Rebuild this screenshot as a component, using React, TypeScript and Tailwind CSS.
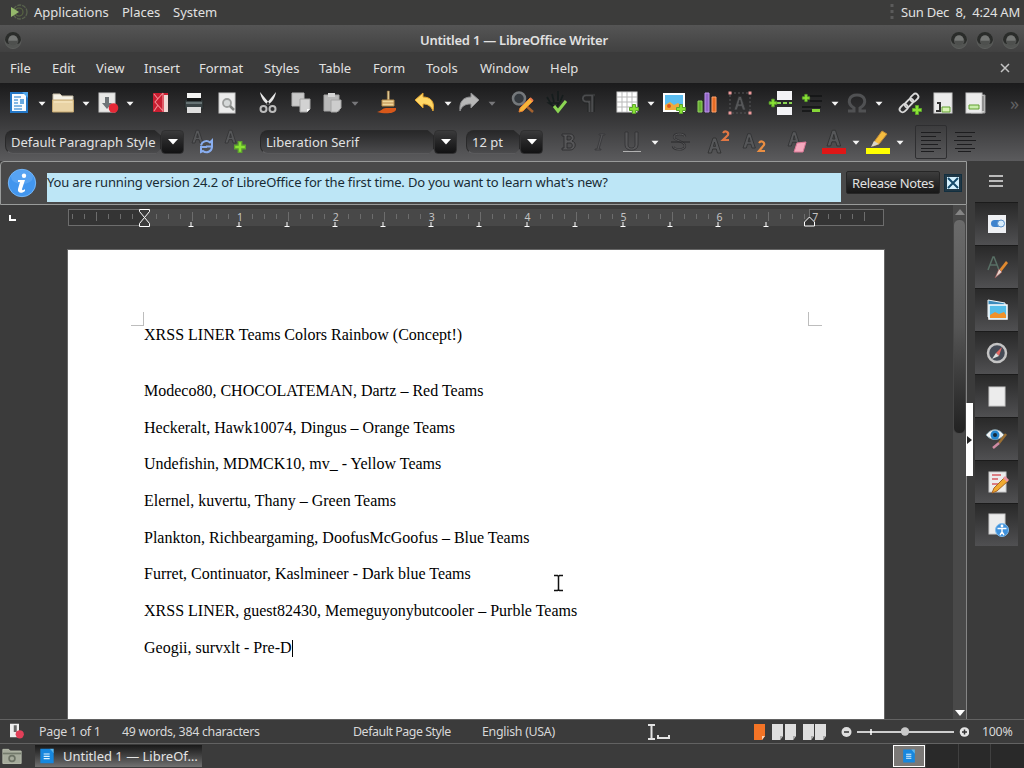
import React from "react";

type P = { children?: React.ReactNode; className?: string };

const Ico = ({ children, className = "h-6 w-6" }: P) => (
  <svg viewBox="0 0 24 24" className={`shrink-0 overflow-visible ${className}`} fill="none">
    {children}
  </svg>
);

const Drop = ({ className = "", dim = false }: { className?: string; dim?: boolean }) => (
  <svg viewBox="0 0 8 6" className={`mt-0.5 h-1.5 w-2 shrink-0 ${className}`}>
    <path d="M0.5 0.7h7L4 4.8z" fill={dim ? "#77777a" : "#f5f5f5"} />
  </svg>
);

const Plus = ({ x, y, s = 1 }: { x: number; y: number; s?: number }) => (
  <g transform={`translate(${x} ${y}) scale(${s})`}>
    <path d="M-1.500-4.500h3v3h3v3h-3v3h-3v-3h-3v-3h3z" fill="#8ae234" stroke="#5da52c" strokeWidth="1" />
  </g>
);

const Orb = ({ className = "" }: P) => (
  <svg viewBox="0 0 20 20" className={`h-5 w-5 shrink-0 ${className}`}>
    <circle cx="10" cy="10.600" r="8" fill="#525452" stroke="#5b5d5b" />
    <path d="M2 10a8 8 0 0 1 16 0c-1 3-2.400 4-3.800 4a5 5 0 1 0-8 0C4.600 14 3 13 2 10z" fill="#2a2c2a" />
    <circle cx="10" cy="9.800" r="4.500" fill="#747674" />
    <path d="M5.500 10.800h9a4.500 4.500 0 0 1-9 0z" fill="#4e504e" />
  </svg>
);

const GlyphA = ({ x = 3, y = 20, s = 1 }: { x?: number; y?: number; s?: number }) => (
  <g transform={`translate(${x} ${y}) scale(${s})`} stroke="#2d2e2f" fill="#565759" strokeWidth="0.8">
    <path d="M0 0 5-15h3L13 0h-3.500L8.300-4H4.700L3.500 0zM5.400-6.600h2.200L6.500-11z" />
  </g>
);

const Combo = ({ text, className, field }: { text: string; className: string; field: string }) => (
  <div className={`flex h-[25px] shrink-0 ${className}`}>
    <div
      className={`flex h-[24px] items-center overflow-hidden rounded-l-lg border border-[#29292a] border-b-[#606062] bg-linear-to-b from-[#272728] to-[#4b4b4d] pl-[5px] [clip-path:polygon(0_0,calc(100%_-_7px)_0,100%_25%,100%_80%,calc(100%_-_5px)_100%,0_100%)] ${field}`}
    >
      <span className="whitespace-nowrap">{text}</span>
    </div>
    <div className="flex h-[24px] w-[23px] shrink-0 items-center justify-center rounded-sm border border-[#303031] bg-linear-to-b from-[#3a3a3b] to-[#121213]">
      <svg viewBox="0 0 10 6" className="h-1.5 w-2.5"><path d="M0 0h10L5 5.500z" fill="#fff" /></svg>
    </div>
  </div>
);

const Menus = () => (
  <div className="flex h-[31px] items-center pt-px pl-[10px]">
    <span className="w-[42px]">File</span>
    <span className="w-[44px]">Edit</span>
    <span className="w-[48px]">View</span>
    <span className="w-[55px]">Insert</span>
    <span className="w-[65px]">Format</span>
    <span className="w-[55px]">Styles</span>
    <span className="w-[54px]">Table</span>
    <span className="w-[53px]">Form</span>
    <span className="w-[54px]">Tools</span>
    <span className="w-[70px]">Window</span>
    <span className="w-[30px]">Help</span>
    <svg viewBox="0 0 10 10" className="mr-[14px] ml-auto h-2.5 w-2.5"><path d="M1 1l8 8M9 1l-8 8" stroke="#c4c4c4" strokeWidth="1.500" /></svg>
  </div>
);

const Page = ({ x = 3, y = 2, w = 18, h = 20 }) => <rect x={x} y={y} width={w} height={h} fill="#ececec" stroke="#c9c9c9" strokeWidth="1" />;

const StandardBar = () => (
  <div className="flex h-10 items-center overflow-hidden">
    <Ico className="ml-[7px] h-6 w-6">
      <rect x="4" y="2" width="16" height="19" fill="#f7fbff" stroke="#2478c8" strokeWidth="2" />
      <path d="M7 6h7M7 9h4M7 12h4M7 15h8M7 18h8" stroke="#5fa3dd" strokeWidth="1.300" />
      <path d="M13 8h4v5h-4z" fill="#65a8e0" />
      <path d="M15 1h6v6z" fill="#4ca5ec" />
    </Ico>
    <Drop className="ml-[7px]" />
    <Ico className="ml-[5px] h-6 w-6">
      <path d="M2 3h7l2 2h11v6H2z" fill="#f5f1e6" stroke="#c9bfa8" />
      <path d="M1.500 9h21v12h-21z" fill="#e9d3a5" stroke="#c4a770" />
      <path d="M3 11h18" stroke="#faecc9" />
    </Ico>
    <Drop className="ml-[7px]" />
    <Ico className="ml-1.5 h-6 w-6">
      <rect x="3" y="2" width="16" height="19" fill="#e8e8e6" stroke="#ccc" />
      <path d="M9 6h4v6h3l-5 6-5-6h3z" fill="#6e7477" />
      <circle cx="17.500" cy="17" r="4.800" fill="#e52735" />
    </Ico>
    <Drop className="ml-1.5" />
    <Ico className="ml-[15px] h-6 w-6">
      <path d="M4 2h15v19H4z" fill="#c91e31" />
      <path d="M15 4h4v17h-4z" fill="#f0d8d5" />
      <path d="M14 2 6 11l8 9M5 3l4 5M5 20l4-6M14 2v19" stroke="#f28a93" strokeWidth="1.100" />
    </Ico>
    <Ico className="ml-[9px] h-6 w-6">
      <path d="M5 2h14v7H5z" fill="#f4f4f3" />
      <path d="M3 9h18v9H3z" fill="#3a4345" stroke="#242828" />
      <path d="M4 12h16" stroke="#91a2a3" />
      <path d="M5 16h14v6H5z" fill="#dedede" />
      <path d="M5 7h14v3H5z" fill="#151717" />
    </Ico>
    <Ico className="ml-[9px] h-6 w-6">
      <Page x={4} y={2} w={16} h={20} />
      <circle cx="12" cy="12" r="4" fill="#d5d8d8" stroke="#9d9f9e" strokeWidth="1.800" />
      <path d="m15 15 4 4" stroke="#858785" strokeWidth="2.500" />
    </Ico>
    <Ico className="ml-[17px] h-6 w-6">
      <path d="M4 1c1 6 4 10 8 13l2-1zM20 1c-1 6-4 10-8 13l-2-1z" fill="#e8e8e8" />
      <ellipse cx="7.500" cy="18" rx="3" ry="3" stroke="#bcbcbc" strokeWidth="2" />
      <ellipse cx="16.500" cy="18" rx="3" ry="3" stroke="#bcbcbc" strokeWidth="2" />
    </Ico>
    <Ico className="ml-[9px] h-6 w-6">
      <path d="M3 2h12v13H3z" fill="#c9c9c9" stroke="#b4b4b4" />
      <path d="M11 8h10v10l-3 3h-7z" fill="#d2d2d2" stroke="#a5a5a5" />
      <path d="M18 21v-3h3z" fill="#fff" />
    </Ico>
    <Ico className="ml-2 h-6 w-6">
      <path d="M3 4h15v16H3z" fill="#b9b9b9" stroke="#a5a5a5" /><path d="M7 2h7v4H7z" fill="#d5d5d5" />
      <path d="M10 9h10v8l-4 4h-6z" fill="#cdcdcd" stroke="#a5a5a5" />
    </Ico>
    <Drop dim className="ml-1.5" />
    <Ico className="ml-[17px] h-6 w-6">
      <path d="M11.300 0h2v9h-2z" fill="#e4d39d" stroke="#9e7440" strokeWidth=".6" />
      <path d="M6 9h12v6H6z" fill="#efd69a" stroke="#b38949" />
      <path d="M6 12h12" stroke="#b98a4d" />
      <path d="M1 21c5-1 5-4 9-4h10v2c-2 4-12 4-19 2z" fill="#d8581a" />
    </Ico>
    <Ico className="ml-[13px] h-6 w-6"><path d="m2 9 8-7v4c8 0 12 5 10 14-2-5-5-7-10-7v4z" fill="#ffd766" stroke="#e0a230" /></Ico>
    <Drop className="ml-[7px]" />
    <Ico className="ml-[5px] h-6 w-6"><path d="m22 9-8-7v4C6 6 2 11 3 20c2-5 5-7 11-7v4z" fill="#b7b7b7" stroke="#8d8d8f" /></Ico>
    <Drop dim className="ml-[7px]" />
    <Ico className="ml-[15px] h-6 w-6">
      <circle cx="8" cy="7.500" r="6" fill="#353a3f" stroke="#74787b" strokeWidth="2.500" />
      <path d="m13 13 9 8" stroke="#a4622f" strokeWidth="2.500" />
      <path d="m9 17 10-10 3 3-10 10-4 1z" fill="#f5b73a" stroke="#e58034" />
      <path d="m19 7 3 3" stroke="#f07a4b" strokeWidth="2" />
    </Ico>
    <Ico className="ml-[11px] h-6 w-6">
      <path d="m1 6 4 7M6 3l2 8M12 0v10M17 4l-3 7M3 12h10l-3 5z" stroke="#161d1d" strokeWidth="1.700" />
      <path d="m8 15 4 5 8-10" stroke="#8bd552" strokeWidth="3" />
    </Ico>
    <Ico className="ml-[7px] h-6 w-6"><path d="M18 4H9a3.500 3.500 0 0 0 0 7h3v10M15.500 4v17" stroke="#4b4c4e" strokeWidth="2.500" /><path d="M18 3H9a4 4 0 0 0 0 9h2v9M17 4v17" stroke="#18191a" strokeWidth=".8" /></Ico>
    <Ico className="ml-[15px] h-6 w-6">
      <rect x="1" y="1" width="20" height="20" fill="#fff" stroke="#d0d0d0" />
      <path d="M1 6h20M1 11h20M1 16h20M6 1v20M11 1v20M16 1v20" stroke="#b9b9b9" />
      <Plus x={18} y={18} />
    </Ico>
    <Drop className="ml-[7px]" />
    <Ico className="ml-[7px] h-6 w-6">
      <path d="M2 3h20v17H2z" fill="#5bbdf0" stroke="#fff" strokeWidth="2" />
      <path d="m3 14 5-3 4 3 4-2 5 4v3H3z" fill="#f0aa3b" /><circle cx="7" cy="15" r="2" fill="#e3551a" />
      <Plus x={19} y={18} />
    </Ico>
    <Ico className="ml-[9px] h-6 w-6">
      <path d="M3 10h4v11H3z" fill="#67ad31" stroke="#91d55f" />
      <path d="M10 2h4v19h-4z" fill="#9265c6" stroke="#bd95ed" />
      <path d="M17 6h4v15h-4z" fill="#e66c25" stroke="#ffa16b" />
    </Ico>
    <Ico className="ml-[9px] h-6 w-6">
      <rect x="2" y="2" width="20" height="20" stroke="#565658" strokeDasharray="2 2" /><GlyphA x={6} y={19} s={0.9} />
      <path d="M0.500 0.500h3v3h-3zM20.500 0.500h3v3h-3zM0.500 20.500h3v3h-3zM20.500 20.500h3v3h-3z" fill="#ed9a9a" />
    </Ico>
    <Ico className="ml-[17px] h-6 w-6">
      <path d="M8 0h15v9H8zM8 16h15v8H8z" fill="#f3f3f6" />
      <path d="M8 12h15" stroke="#8ad453" strokeWidth="2" strokeDasharray="4 2" /><Plus x={4} y={12} s={0.85} />
    </Ico>
    <Ico className="ml-2 h-6 w-6">
      <path d="M9 5h12M9 10h12M1 16h19M1 20h10" stroke="#121314" strokeWidth="1.300" />
      <Plus x={5} y={7} s={0.8} /><path d="M11 18h8v3h-8z" fill="#86d638" />
    </Ico>
    <Drop className="ml-1.5" />
    <Ico className="ml-1.5 h-6 w-6"><path d="M3 20h6v-3C1 12 4 4 12 4s11 8 3 13v3h6" stroke="#505153" strokeWidth="3" /></Ico>
    <Drop className="ml-1.5" />
    <Ico className="ml-[15px] h-6 w-6">
      <g stroke="#d9d9d9" strokeWidth="1.800" transform="rotate(-45 11 12)"><rect x="-1" y="9" width="9" height="6" rx="3" /><rect x="14" y="9" width="9" height="6" rx="3" /><rect x="6" y="9.500" width="10" height="5" rx="2.500" /></g>
      <Plus x={19} y={19} />
    </Ico>
    <Ico className="ml-[9px] h-6 w-6">
      <Page /><path d="M6 12h3v9M5 20h5" stroke="#333" strokeWidth="2" /><path d="M11 16h8v5h-8z" fill="#d9f4b5" stroke="#609f30" />
    </Ico>
    <Ico className="ml-[9px] h-6 w-6">
      <path d="M7 4h14v18H7z" fill="#cfcfcf" stroke="#999" /><Page y={2} x={2} w={16} /><path d="M5 14h10v4H5z" fill="#c9edab" stroke="#609f30" />
      <path d="M19 5v15" stroke="#555" />
    </Ico>
    <span className="ml-[22px] text-lg text-[#616163]">»</span>
  </div>
);

const FormatBar = () => (
  <div className="flex h-[38px] items-center overflow-hidden">
    <Combo text="Default Paragraph Style" className="ml-[5px] w-[179px]" field="w-[157px]" />
    <Ico className="ml-[7px] h-6 w-6">
      <GlyphA x={1} y={13} s={0.85} />
      <path d="M10 15.500a5.500 5.500 0 0 1 9-3l2-2v6h-6M21 17a5.500 5.500 0 0 1-9 4l-2 1v-5h6" stroke="#89aef0" strokeWidth="2" />
    </Ico>
    <Ico className="ml-[9px] h-6 w-6"><GlyphA x={1} y={13} s={0.85} /><Plus x={16} y={17} s={1.200} /></Ico>
    <Combo text="Liberation Serif" className="ml-[12px] w-[197px]" field="w-[175px]" />
    <Combo text="12 pt" className="ml-[9px] w-[79px]" field="w-[54px]" />
    <Ico className="ml-[11px] h-6 w-6"><path d="M6 4h8c5 0 5 6 2 7 5 1 4 9-2 9H6v-2h2V6H6zM11 6v4h2c3 0 3-4 0-4zM11 13v5h3c3 0 3-5 0-5z" fill="#565658" stroke="#29292b" strokeWidth=".8" /></Ico>
    <Ico className="ml-2 h-6 w-6"><path d="M11 4h6v1h-2l-4 14h2v1H7v-1h2l4-14h-2z" fill="#565658" stroke="#343436" strokeWidth=".7" /></Ico>
    <Ico className="ml-2 h-6 w-6"><path d="M5 2h3v13c0 4 7 4 7 0V2h3v13c0 7-13 7-13 0z" fill="#565658" stroke="#303032" strokeWidth=".8" /><path d="M3 21.500h18" stroke="#b1b1b1" /></Ico>
    <Drop className="ml-[7px]" />
    <Ico className="ml-[9px] h-6 w-6"><path d="M17 7c0-4-11-4-11 0s11 4 11 9c0 5-12 4-12 0" stroke="#343436" strokeWidth="2.400" /><path d="M17 7c0-4-11-4-11 0s11 4 11 9c0 5-12 4-12 0" stroke="#58585a" strokeWidth="1" /><path d="M3 12h19" stroke="#29292b" /></Ico>
    <Ico className="ml-[15px] h-6 w-6"><GlyphA x={1} y={23} s={1} /><path d="M16 3c2-3 6-1 5 2l-5 5h6" stroke="#e27744" strokeWidth="2.200" /></Ico>
    <Ico className="ml-[11px] h-6 w-6"><GlyphA x={1} y={18} s={0.95} /><path d="M17 13c2-3 6-1 5 2l-5 6h6" stroke="#ea8e42" strokeWidth="2.200" /></Ico>
    <Ico className="ml-[19px] h-6 w-6"><GlyphA x={3} y={16} s={0.95} /><path d="m12 13 9-1-3 10H9z" fill="#f5a9be" stroke="#dd7997" /></Ico>
    <Ico className="ml-[13px] h-6 w-6"><GlyphA x={5} y={16} s={1.050} /><path d="M0 18h24v6H0z" fill="#df1717" /></Ico>
    <Drop className="ml-1.5" />
    <Ico className="ml-1.5 h-6 w-6"><path d="m8 12 8-11 5 3-8 10-6 2z" fill="#f5bd3f" stroke="#c08c39" /><path d="m8 11 5 3-8 3z" fill="#d9d5c9" /><path d="M0 18h24v6H0z" fill="#ffff00" /></Ico>
    <Drop className="ml-1.5" />
    <div className="ml-[11px] flex h-[34px] w-8 shrink-0 items-center justify-center rounded-xs border border-[#2e2e30]">
      <svg viewBox="0 0 24 24" className="h-6 w-6"><path d="M2 2.500h20M2 6.500h15M2 10.500h20M2 14.500h17M2 18.500h20M2 21.500h13" stroke="#1d1d1f" /></svg>
    </div>
    <Ico className="ml-[6px] h-6 w-6"><path d="M2 2.500h20M4 6.500h15M1 10.500h22M4 14.500h15M2 18.500h20M5 21.500h13" stroke="#1d1d1f" /></Ico>
  </div>
);

const InfoBar = () => (
  <div className="flex h-[44px] w-[967px] shrink-0 items-start rounded-tl-sm border border-[#999b9a] bg-[#494949]">
    <svg viewBox="0 0 30 30" className="mt-[6px] ml-[6px] h-[30px] w-[30px]">
      <circle cx="15" cy="15" r="13.700" fill="#4296ee" stroke="#76b6f6" />
      <ellipse cx="15" cy="9" rx="11" ry="7" fill="#69aef5" opacity=".55" />
      <g fill="#fff"><circle cx="17" cy="7.700" r="2.200" /><path d="M11 12h7l-3 9c0 2 2 1 3 0v2c-3 3-8 2-7-2l2-7h-2z" /></g>
    </svg>
    <div className="mt-[11px] ml-[10px] h-[29px] w-[794px] bg-[#bde6f6] text-[#182b34]">
      <span className="block leading-[19px] tracking-[-0.155px]">You are running version 24.2 of LibreOffice for the first time. Do you want to learn what's new?</span>
    </div>
    <div className="mt-[9px] ml-[5px] flex h-[23px] w-[94px] items-center justify-center rounded-xs border border-[#262626] bg-linear-to-b from-[#3d3d3d] to-[#181818] tracking-[-0.350px] whitespace-nowrap">Release Notes</div>
    <div className="mt-[12px] ml-[4px] flex h-[18px] w-[18px] items-center justify-center border border-[#132f3f] bg-[#203846]">
      <svg viewBox="0 0 12 12" className="h-3 w-3"><path d="M0 0h12v12H0z" fill="#d6f2ff" /><path d="m1 1 10 10M11 1 1 11" stroke="#174b6b" strokeWidth="2" /></svg>
    </div>
  </div>
);

const Ruler = () => (
  <div className="flex h-[44px] shrink-0 items-start pt-[4px]">
    <svg viewBox="0 0 10 10" className="mt-[4px] ml-[8px] h-2.5 w-2.5"><path d="M2 2v5h6" stroke="#fff" strokeWidth="2" fill="none" /></svg>
    <svg viewBox="68 209 817 22" className="ml-[50px] h-[22px] w-[817px]" fill="none">
      <rect x="144" y="209" width="666" height="17" fill="#484848" />
      <rect x="68.500" y="209.500" width="76" height="16" fill="#343434" stroke="#6d6d6d" />
      <rect x="809.500" y="209.500" width="74" height="16" fill="#343434" stroke="#6d6d6d" />
      {Array.from({ length: 67 }, (_, i) => i - 6).map((i) => {
        const x = Math.round(144 + i * 12) + 0.5;
        if (x > 882 || x < 70 || (i > 0 && i % 8 === 0)) return null;
        return <path key={i} d={i % 4 === 0 ? `M${x} 212v9` : `M${x} 214v5`} stroke="#6c6c6c" />;
      })}
      {[1, 2, 3, 4, 5, 6, 7].map((n) => (
        <text key={n} x={144 + n * 95.900} y="221" textAnchor="middle" fill="#c4c4c4" fontSize="10.500" fontFamily="Noto Sans">{n}</text>
      ))}
      {Array.from({ length: 13 }, (_, i) => Math.round(143.500 + (i + 1) * 47.900)).map((x) => (
        <path key={x} d={`M${x - 2.500} 226.500h5M${x} 222v5`} stroke="#fff" />
      ))}
      <path d="M139.500 209.500h10v2l-5 6 5 6v3h-10v-3l5-6-5-6z" fill="#3b3b3b" stroke="#fff" strokeWidth="1" />
      <path d="M804.500 226v-4l5-5 5 5v4z" fill="#333" stroke="#fff" strokeWidth="1" />
    </svg>
  </div>
);

const lines = [
  "Modeco80, CHOCOLATEMAN, Dartz – Red Teams",
  "Heckeralt, Hawk10074, Dingus – Orange Teams",
  "Undefishin, MDMCK10, mv_ - Yellow Teams",
  "Elernel, kuvertu, Thany – Green Teams",
  "Plankton, Richbeargaming, DoofusMcGoofus – Blue Teams",
  "Furret, Continuator, Kaslmineer - Dark blue Teams",
  "XRSS LINER, guest82430, Memeguyonybutcooler – Purble Teams",
];

const Document = () => (
  <div className="ml-[67px] h-[470px] w-[818px] shrink-0 border border-b-0 border-[#666] bg-white px-[63px] pt-[62px] font-['Liberation_Serif',serif] text-base text-black">
    <div className="flex h-[14px] justify-between">
      <div className="w-[13px] border-r border-b border-[#bdbdbd]" />
      <div className="mr-[-1px] w-[14px] border-b border-l border-[#bdbdbd]" />
    </div>
    <div className="pl-[13px] whitespace-nowrap">
      <div className="mb-[19px] h-[37px] leading-[17px]">XRSS LINER Teams Colors Rainbow (Concept!)</div>
      {lines.map((l) => (
        <div key={l} className="h-[36.700px] leading-[18px]">{l}</div>
      ))}
      <div className="flex h-[20px] leading-[18px]">Geogii, survxlt - Pre-D<span className="mt-[1px] h-[17px] w-px bg-black" /></div>
    </div>
  </div>
);

const sideIcons = [
  <Ico key="p"><rect x="3" y="3" width="18" height="18" fill="#eef0f3" /><rect x="6" y="8" width="13" height="7" rx="3.500" fill="#3f83cd" /><circle cx="16" cy="11.500" r="3.500" fill="#d9edfb" stroke="#5b91ca" /></Ico>,
  <Ico key="a"><path d="m3 15 5-13h1l5 13M5 10h7" stroke="#586f65" strokeWidth="1.500" /><path d="m14 15 7-9 2 2-7 9z" fill="#e18a2f" /><path d="m14 14 3 3-7 6z" fill="#ead5cc" stroke="#9b5050" strokeWidth=".6" /></Ico>,
  <Ico key="g"><path d="m3 2 17 3v14H3z" fill="#3b8bbb" stroke="#edf5f8" /><path d="M4 7h18v14H4z" fill="#54bee9" stroke="#fff" strokeWidth="1.500" /><path d="m5 17 5-3 4 2 5-2 2 3v3H5z" fill="#f09129" /></Ico>,
  <Ico key="n"><circle cx="12" cy="12" r="9" fill="#454b56" stroke="#c4c4c4" strokeWidth="2.500" /><path d="m17 6-3 9-3-3z" fill="#e36763" /><path d="m7 18 4-6 3 3z" fill="#ddd" /></Ico>,
  <Ico key="d"><Page x={4} y={3} w={16} h={19} /></Ico>,
  <Ico key="e"><path d="M1 8c5-7 13-7 18 0-5 6-13 6-18 0z" fill="#f3f5f5" stroke="#849da7" /><circle cx="10" cy="8" r="4.500" fill="#2586cf" /><circle cx="10" cy="8" r="2" fill="#172b3a" /><path d="m14 16 7-9" stroke="#9c7034" strokeWidth="2.500" /><path d="m8 21 6-5" stroke="#cf8ba2" strokeWidth="2.500" /></Ico>,
  <Ico key="r"><Page x={4} y={2} w={17} h={20} /><path d="M7 5h9M7 9h6M7 14h9" stroke="#d65a60" strokeWidth="1.500" /><path d="m9 18 10-10 4 3-11 10-5 2z" fill="#efaa31" stroke="#a86525" /><path d="m19 7 4 4" stroke="#e994a0" strokeWidth="3" /></Ico>,
  <Ico key="x"><Page x={4} y={1} w={16} h={20} /><circle cx="17" cy="17" r="6.500" fill="#3e91dc" stroke="#82bcec" /><circle cx="17" cy="13" r="1.400" fill="#fff" /><path d="M12.500 15.500h9M17 16v3l-2 3M17 19l2 3" stroke="#fff" strokeWidth="1.400" /></Ico>,
];

const Sidebar = () => (
  <div className="flex flex-1 flex-col">
    <svg viewBox="0 0 14 14" className="mt-[13px] ml-[22px] h-3.5 w-3.5"><path d="M0 2h14M0 7h14M0 12h14" stroke="#e6e6e6" strokeWidth="1.500" /></svg>
    <div className="mt-[14px] ml-[8px] flex w-[43px] flex-col">
      {sideIcons.map((icon, i) => (
        <div key={i} className="flex h-[43px] items-center justify-center border-t border-[#1b1b1b] bg-linear-to-b from-[#292929] to-[#505052]">{icon}</div>
      ))}
    </div>
  </div>
);

const StatusBar = () => (
  <div className="flex h-[25px] shrink-0 items-center border-t border-b border-[#626262] bg-[#3b3b3b] text-[12.400px] tracking-[-0.280px] text-[#d8d8d8]">
    <Ico className="ml-[7px] h-[18px] w-[18px]"><path d="M4 1h12v18H4z" fill="#eee" /><path d="M9 3h4v9H9z" fill="#666" /><circle cx="17" cy="15" r="5.500" fill="#e23f58" /></Ico>
    <span className="ml-[14px] w-[83px]">Page 1 of 1</span>
    <span className="w-[231px] tracking-[-0.300px]">49 words, 384 characters</span>
    <span className="w-[129px] tracking-[-0.450px]">Default Page Style</span>
    <span className="w-[165px]">English (USA)</span>
    <svg viewBox="0 0 24 16" className="h-4 w-6" fill="none" stroke="#e4e4e4" strokeWidth="2"><path d="M1 1h7M4.500 1v14M1 15h7M11 11v3h11v-3" /></svg>
    <svg viewBox="0 0 74 16" className="ml-[83px] h-4 w-[74px]">
      <path d="M0 0h11v12l-3 4H0z" fill="#f47426" /><path d="M8 16v-4h3z" fill="#ffd2b2" />
      {[18, 31, 49, 61].map((x) => <g key={x}><path d={`M${x} 0h11v12l-3 4h-8z`} fill="#dedede" /><path d={`M${x + 8} 16v-4h3z`} fill="#aaa" /></g>)}
    </svg>
    <svg viewBox="0 0 128 12" className="ml-[13px] h-3 w-32">
      <circle cx="5.500" cy="6" r="5" fill="#dedede" /><path d="M3 6h5" stroke="#333" strokeWidth="1.500" />
      <path d="M16 6h97M30 3v6" stroke="#fff" strokeWidth="1.500" /><circle cx="64" cy="5.500" r="4.200" fill="#c8c8c8" />
      <circle cx="123.500" cy="6" r="4.800" fill="#e5e5e5" /><path d="M121 6h5M123.500 3.500v5" stroke="#333" strokeWidth="1.500" />
    </svg>
    <span className="ml-[13px]">100%</span>
  </div>
);

const WriterIcon = () => (
  <><path d="M2 1h14l6 6v16H2z" fill="#1687de" /><path d="M16 1h6v7z" fill="#55b9f7" /><path d="M7 9h9M7 12.500h9M7 16h9" stroke="#dff4ff" strokeWidth="1.800" /></>
);

const TaskBar = () => (
  <div className="flex h-6 shrink-0 items-center bg-[#3b3b3b]">
    <Ico className="ml-[2px] h-5 w-5"><path d="M1 4h7l2 2h13v15H1z" fill="#a5aa9b" stroke="#bcc0b0" /><path d="M1 9h22" stroke="#737a6c" strokeWidth="2" /><circle cx="12" cy="15" r="3.500" stroke="#6c7265" strokeWidth="2" /></Ico>
    <div className="ml-[13px] flex h-[22px] w-[167px] items-center overflow-hidden bg-linear-to-b from-[#191919] to-[#717171] whitespace-nowrap text-[#e4e4e4]">
      <Ico className="ml-[4px] h-4 w-4"><WriterIcon /></Ico>
      <span className="ml-[8px]">Untitled 1 — LibreOf…</span>
    </div>
    <div className="ml-[691px] flex h-[22px] w-8 shrink-0 items-center justify-center border border-white bg-[#7b7977]"><Ico className="h-3.5 w-3.5"><WriterIcon /></Ico></div>
    <div className="ml-[1px] grid h-6 flex-1 grid-cols-3 bg-[#292929]"><div className="border-r border-[#404040]" /><div className="border-r border-[#404040]" /><div /></div>
  </div>
);

export default function App() {
  return (
    <div className="relative flex h-[768px] w-[1024px] flex-col overflow-hidden bg-[#3b3b3b] font-['Noto_Sans',sans-serif] text-[13px] leading-[18px] text-[#e1e1e1]">
      <div className="flex h-[25px] shrink-0 items-center bg-[#3c3c3b] pb-px text-[13px]">
        <svg viewBox="0 0 20 18" className="ml-[9px] h-[18px] w-5" fill="none"><circle cx="11" cy="9" r="7" stroke="#59644e" strokeWidth="1.300" strokeDasharray="4 1" /><circle cx="10" cy="9" r="4" stroke="#586642" strokeWidth="1.200" /><path d="m2 4 8 5-8 5z" fill="#95b96b" /></svg>
        <span className="ml-[5px] w-[88px]">Applications</span><span className="w-[51px]">Places</span><span>System</span>
        <svg viewBox="0 0 4 16" className="ml-auto h-4 w-1"><path d="M2 0v16" stroke="#5b5b5b" strokeWidth="3" strokeDasharray="3 3" /></svg>
        <span className="mr-[4px] ml-[7px] tracking-[-0.220px] whitespace-pre">Sun Dec  8,  4:24 AM</span>
      </div>
      <div className="flex h-[27px] shrink-0 items-center bg-linear-to-b from-[#555] to-[#414141] pt-[3px]">
        <Orb className="ml-[3px]" />
        <span className="ml-[397px] text-[13px] font-semibold tracking-[-0.240px]">Untitled 1 — LibreOffice Writer</span>
        <div className="mr-[3px] ml-auto flex gap-[6px]"><Orb /><Orb /><Orb /></div>
      </div>
      <Menus />
      <div className="h-[78px] shrink-0 bg-linear-to-b from-[#1b1b1c] to-[#5b5b5d]"><StandardBar /><FormatBar /></div>
      <div className="flex h-[558px] shrink-0">
        <div className="flex w-[967px] shrink-0 flex-col">
          <InfoBar />
          <div className="flex h-[514px]">
            <div className="h-[514px] w-[953px] overflow-hidden"><Ruler /><Document /></div>
            <div className="flex w-[14px] flex-col items-center border-r border-[#858585] bg-[#494949]">
              <svg viewBox="0 0 10 6" className="mt-[4px] h-1.5 w-2.5"><path d="M0 6 5 0l5 6z" fill="#858585" /></svg>
              <div className="mt-[4px] h-[215px] w-[13px] rounded-md border border-[#464646] bg-linear-to-b from-[#6b6b6b] via-[#555] to-[#222]" />
              <svg viewBox="0 0 10 6" className="mt-auto mb-[3px] h-1.5 w-2.5"><path d="M0 0h10L5 6z" fill="#fff" /></svg>
            </div>
          </div>
        </div>
        <Sidebar />
      </div>
      <StatusBar />
      <TaskBar />
      <div className="absolute top-[403px] left-[966px] flex h-[73px] w-[7px] items-center bg-white"><svg viewBox="0 0 6 8" className="h-2 w-1.5"><path d="M1 0v8l5-4z" fill="#222" /></svg></div>
      <svg viewBox="0 0 9 18" className="absolute top-[574px] left-[554px] h-[18px] w-[9px]" fill="none"><path d="M0 1.500h3.500l1 1 1-1H9M4.500 2v14M0 16.500h3.500l1-1 1 1H9" stroke="#111" strokeWidth="1.500" /></svg>
    </div>
  );
}
